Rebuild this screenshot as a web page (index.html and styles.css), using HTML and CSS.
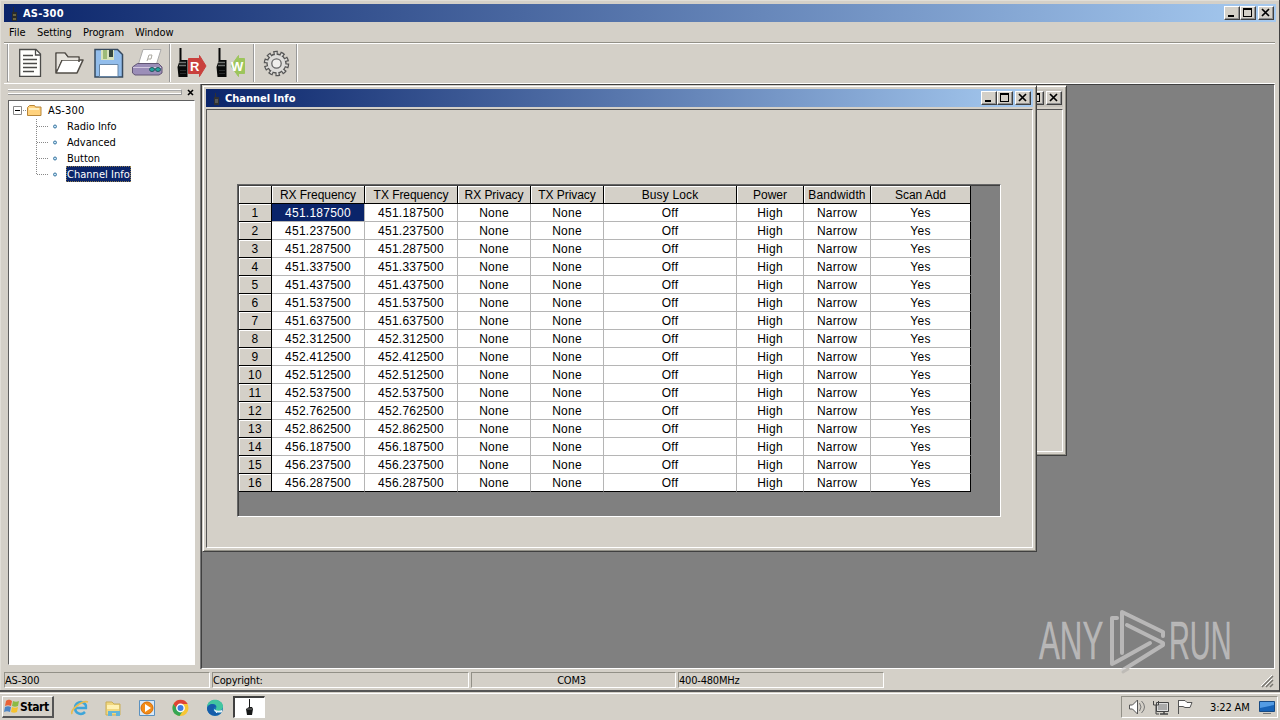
FILE: index.html
```html
<!DOCTYPE html>
<html lang="en">
<head>
<meta charset="utf-8">
<title>AS-300</title>
<link rel="stylesheet" href="styles.css">
</head>
<body>
<main class="app">
  <header class="titlebar">
    <svg class="app-icon" width="19" height="18"><path d="M9 3h1v5h3v9H8V8h1z" fill="#292b2b"/><path d="M9 10h3v2H9zM9 14h3v2H9z" fill="#6b6441"/></svg>
    <span class="title title-main">AS-300</span>
    <div class="controls"><i class="btn min"></i><i class="btn max"></i><i class="btn close"><svg width="14" height="12"><path d="M3 2l7 7M10 2l-7 7" stroke="#000" stroke-width="1.7"/></svg></i></div>
  </header>
  <nav class="menu"><span class="m-file">File</span><span class="m-set">Setting</span><span class="m-prog">Program</span><span class="m-win">Window</span></nav>
  <div class="toolbar">
    <svg class="tools" width="300" height="40" viewBox="0 43 300 40" fill="none">
      <path d="M8.500 44v37" stroke="#fff"/><path d="M7.500 44v38" stroke="#999"/>
      <g stroke="#4b4b49" stroke-width="1.300"><path d="M19.700 49.500h16.300l4.500 4.500v22.300H19.700z" fill="#fffffd"/><path d="M35.500 50v5h5M23 55.500h10M23 59.500h14M23 63.500h14M23 67.500h14M23 71.500h11"/></g>
      <path d="M56 73V53h9l3 4h11v5M56 73l6-13h21l-6 13z" fill="#fff" stroke="#514d47" stroke-width="1.600" stroke-linejoin="round"/><path d="M56.800 70V53.800h7.700l3 4h10.800v2.200H61z" fill="#e6e3dc"/>
      <path d="M95 49.500h22.500l5 5v22.500H95z" fill="#92bdeb" stroke="#36495e" stroke-width="1.500"/><path d="M101 50h13v10h-13z" fill="#d7e2bd"/><path d="M103 50v9h4v-9" fill="#9dbb78"/><path d="M109 50h4v7h-4z" fill="#34463f"/><path d="M99.500 64.500h18.500v12H99.500z" fill="#fff" stroke="#6785a4"/>
      <path d="M143 49.500h18l-5 16h-18z" fill="#fff" stroke="#aaa"/><path d="m149 55-2 6m2-6h3l-1 4h-3" stroke="#aaa8a0"/>
      <path d="M132.500 67l5-3.500h21l3.500 3.500v6l-3 2h-24l-2.500-2z" fill="#9b8eb8" stroke="#625675"/><path d="M133 67.500h28" stroke="#d2c8df"/><ellipse cx="152" cy="69.500" rx="2.500" ry="2" fill="#24a39d" stroke="#255560"/><ellipse cx="158" cy="69.500" rx="2.500" ry="2" fill="#24a39d" stroke="#255560"/>
      <path d="M169.500 44v38M253.500 44v38M296.500 44v38" stroke="#999"/><path d="M170.500 44v38M254.500 44v38M297.500 44v38" stroke="#fff"/>
      <g id="handset"><path d="M179.500 48h2v12h6v17h-9l-1-10 2-6z" fill="#080909"/><path d="M179 62.500h7M179 65.500h7" stroke="#707371" stroke-width="1.500"/><path d="M180 70.500h6M180 73.500h6" stroke="#292c2d"/></g>
      <path d="M188.500 58.500h11v-3l6.500 10.500-6.500 10.500v-3h-11z" fill="#c9403d" stroke="#c9403d"/><text x="190" y="70.500" class="tool-letter">R</text>
      <use href="#handset" x="39"/><path d="M244.500 58.500h-6v-3l-7.500 10.500 7.500 10.500v-3h6z" fill="#9dc55c" stroke="#9dc55c"/><text x="231" y="70.500" class="tool-letter">W</text>
      <circle cx="276.500" cy="63.500" r="10.500" stroke="#555" stroke-width="4.500" stroke-dasharray="4.200 2.397"/><circle cx="276.500" cy="63.500" r="9.500" fill="#deddda" stroke="#555" stroke-width="1.300"/><circle cx="276.500" cy="63.500" r="10" stroke="#deddda" stroke-width="3" stroke-dasharray="1.900 4.383" stroke-dashoffset="-1.050"/><circle cx="276.500" cy="63.500" r="4.700" fill="#f0efec" stroke="#666" stroke-width="1.300"/>
    </svg>
  </div>
  <section class="workspace">
    <aside class="side">
      <div class="grip-row"><i class="grip"></i><svg width="8" height="9"><path d="M1 2l5 5M6 2L1 7" stroke="#000" stroke-width="1.600"/></svg></div>
      <div class="tree">
        <svg class="tree-art" width="60" height="90"><path d="M14 8.500h4M27.500 17v56M28 24.500h11M28 40.500h11M28 56.500h11M28 72.500h11" fill="none" stroke="#888" stroke-dasharray="1 1"/><path d="M4.500 4.500h8v8h-8z" fill="#fff" stroke="#888"/><path d="M6 8.500h5" stroke="#000"/><path d="M18.500 13.500v-8l2-2h5l1 1.500h5.500v8.500z" fill="#ffd27d" stroke="#b88638"/><path d="M20 7h10" stroke="#fff1c4" stroke-width="2"/><g fill="#c7e6fb" stroke="#38749e"><circle cx="46" cy="24.500" r="1.500"/><circle cx="46" cy="40.500" r="1.500"/><circle cx="46" cy="56.500" r="1.500"/><circle cx="46" cy="72.500" r="1.500"/></g></svg>
        <div class="root"><span class="t-root">AS-300</span></div><div><span>Radio Info</span></div><div><span>Advanced</span></div><div><span>Button</span></div><div><span class="selected">Channel Info</span></div>
      </div>
    </aside>
    <div class="mdi">
      <section class="window back-window"><header><div class="controls"><i class="btn min"></i><i class="btn max"></i><i class="btn close"><svg width="14" height="12"><path d="M3 2l7 7M10 2l-7 7" stroke="#000" stroke-width="1.700"/></svg></i></div></header><div class="client"></div></section>
      <section class="window channel-window">
        <header><svg class="app-icon" width="19" height="18"><path d="M9 4h1v4h3v8H8V8h1z" fill="#303132"/><path d="M9 10h3v4H9z" fill="#565757"/></svg><span class="title">Channel Info</span><div class="controls"><i class="btn min"></i><i class="btn max"></i><i class="btn close"><svg width="14" height="12"><path d="M3 2l7 7M10 2l-7 7" stroke="#000" stroke-width="1.700"/></svg></i></div></header>
        <div class="client"><div class="grid-box"><table>
          <colgroup><col class="cn"><col class="cf"><col class="cf"><col class="cp"><col class="cp"><col class="cb"><col class="cw"><col class="cw"><col class="cs"></colgroup>
          <thead><tr><th></th><th>RX Frequency</th><th>TX Frequency</th><th>RX Privacy</th><th>TX Privacy</th><th class="busy">Busy Lock</th><th>Power</th><th class="band">Bandwidth</th><th>Scan Add</th></tr></thead>
          <tbody>
          <tr><th>1</th><td class="active">451.187500</td><td>451.187500</td><td>None</td><td>None</td><td>Off</td><td>High</td><td>Narrow</td><td>Yes</td></tr>
          <tr><th>2</th><td>451.237500</td><td>451.237500</td><td>None</td><td>None</td><td>Off</td><td>High</td><td>Narrow</td><td>Yes</td></tr>
          <tr><th>3</th><td>451.287500</td><td>451.287500</td><td>None</td><td>None</td><td>Off</td><td>High</td><td>Narrow</td><td>Yes</td></tr>
          <tr><th>4</th><td>451.337500</td><td>451.337500</td><td>None</td><td>None</td><td>Off</td><td>High</td><td>Narrow</td><td>Yes</td></tr>
          <tr><th>5</th><td>451.437500</td><td>451.437500</td><td>None</td><td>None</td><td>Off</td><td>High</td><td>Narrow</td><td>Yes</td></tr>
          <tr><th>6</th><td>451.537500</td><td>451.537500</td><td>None</td><td>None</td><td>Off</td><td>High</td><td>Narrow</td><td>Yes</td></tr>
          <tr><th>7</th><td>451.637500</td><td>451.637500</td><td>None</td><td>None</td><td>Off</td><td>High</td><td>Narrow</td><td>Yes</td></tr>
          <tr><th>8</th><td>452.312500</td><td>452.312500</td><td>None</td><td>None</td><td>Off</td><td>High</td><td>Narrow</td><td>Yes</td></tr>
          <tr><th>9</th><td>452.412500</td><td>452.412500</td><td>None</td><td>None</td><td>Off</td><td>High</td><td>Narrow</td><td>Yes</td></tr>
          <tr><th>10</th><td>452.512500</td><td>452.512500</td><td>None</td><td>None</td><td>Off</td><td>High</td><td>Narrow</td><td>Yes</td></tr>
          <tr><th>11</th><td>452.537500</td><td>452.537500</td><td>None</td><td>None</td><td>Off</td><td>High</td><td>Narrow</td><td>Yes</td></tr>
          <tr><th>12</th><td>452.762500</td><td>452.762500</td><td>None</td><td>None</td><td>Off</td><td>High</td><td>Narrow</td><td>Yes</td></tr>
          <tr><th>13</th><td>452.862500</td><td>452.862500</td><td>None</td><td>None</td><td>Off</td><td>High</td><td>Narrow</td><td>Yes</td></tr>
          <tr><th>14</th><td>456.187500</td><td>456.187500</td><td>None</td><td>None</td><td>Off</td><td>High</td><td>Narrow</td><td>Yes</td></tr>
          <tr><th>15</th><td>456.237500</td><td>456.237500</td><td>None</td><td>None</td><td>Off</td><td>High</td><td>Narrow</td><td>Yes</td></tr>
          <tr><th>16</th><td>456.287500</td><td>456.287500</td><td>None</td><td>None</td><td>Off</td><td>High</td><td>Narrow</td><td>Yes</td></tr>
          </tbody></table></div></div>
      </section>
    </div>
  </section>
  <footer class="status"><span class="s1">AS-300</span><span class="s2">Copyright:</span><span class="s3">COM3</span><span class="s4">400-480MHz</span><svg class="resize" width="14" height="14"><path d="M2 13L13 2M6 13l7-7M10 13l3-3" stroke="#77756f" stroke-width="1.500"/><path d="M1 12L12 1M5 12l7-7" stroke="#fff"/></svg></footer>
</main>
<div class="watermark"><svg width="210" height="75" viewBox="1034 605 210 75"><text class="brand" transform="translate(1039 659) scale(.59 1)">ANY</text><text class="brand" transform="translate(1169 659) scale(.545 1)">RUN</text><path d="M1117 618h-5v46l4-2 34-19M1122 653v-41l41 20v4M1127 625l36 18v2l-40 25" fill="none" stroke="#d0cfcf" stroke-opacity=".7" stroke-width="4" stroke-linejoin="round" stroke-linecap="round"/><path d="M1123 672l5-3" stroke="#bebbb6" stroke-width="3" stroke-linecap="round"/></svg></div>
<footer class="taskbar">
  <button class="start"><svg width="17" height="17"><path d="M3 3c3-2 4-1 6 0l-1 5c-2-1-4-1-6 0z" fill="#e96237"/><path d="M10 3c2 1 4 1 6 0l-1 5c-2 1-4 1-6 0z" fill="#8cba45"/><path d="M2 9c2-1 4-1 6 0l-1 5c-2-1-4-1-6 0z" fill="#4d85c5"/><path d="M9 9c2 1 4 1 6 0l-1 5c-2 1-4 1-6 0z" fill="#f6c22e"/></svg><span>Start</span></button>
  <svg class="quick" width="164" height="24" viewBox="66 695 164 24">
    <path d="M85 711c-4 4-10 1-10-4s6-8 10-4c1 1 1.500 2 1 4H76" fill="none" stroke="#3ea5d9" stroke-width="2.500"/><path d="M72 713c-2-4 10-14 16-12" fill="none" stroke="#e8bc50" stroke-width="1.800"/>
    <path d="M106 701h6l2 2h6v11h-14z" fill="#f1d77e" stroke="#c9ad56"/><path d="M107 704h12v4h-12z" fill="#fff1b3"/><path d="M108 715v-5h12v5h-4v-3h-4v3z" fill="#64b5d8"/>
    <path d="M139.500 699.500h15v15h-15z" fill="#d8e8f8" stroke="#5b91bf"/><circle cx="147" cy="707" r="6" fill="#f38b16" stroke="#d66d05"/><path d="M145 703l6 4-6 4z" fill="#fff"/>
    <circle cx="180.500" cy="707" r="8" fill="#f7c635"/><path d="M173.500 703a8 8 0 0 1 14.200 0h-7.200a4 4 0 0 0-3.500 6z" fill="#df4335"/><path d="M173.500 703a8 8 0 0 0 6 12l4-6a4 4 0 0 1-6-.5z" fill="#36a654"/><circle cx="180.500" cy="707" r="3.700" fill="#3d7de0" stroke="#fff" stroke-width="1.400"/>
    <circle cx="215" cy="707" r="8" fill="#1675b5"/><path d="M207 706c1-10 15-9 16-1 0 5-5 6-8 4 3-3 1-6-2-6-4 0-6 3-6 3" fill="#42c6a0"/><path d="M207 707c2-5 8-5 9-1-5 0-3 8 5 6-5 5-14 2-14-5" fill="#165da9"/><path d="M214 708c0 4 5 4 8 3v-2c-3 1-6 1-8-1z" fill="#e6f3f8"/>
  </svg>
  <div class="task"><svg width="28" height="20"><path d="M14 1h1v8h2l1 2-1 6h-5l-1-6 3-2z" fill="#171818"/><path d="M12 11h5" stroke="#777"/></svg></div>
  <div class="tray"><svg width="70" height="20" viewBox="1126 697 70 20"><path d="M1129.500 705h3l5-5v14l-5-5h-3z" fill="#fff" stroke="#555"/><path d="M1139.500 703q3 4 0 8M1141.500 701q6 6 0 12" fill="none" stroke="#777"/><path d="M1156.500 702.500h12v9h-12z" fill="#ddd" stroke="#444"/><path d="M1158 704h9v6h-9z" fill="#aaa"/><path d="M1160 714h8M1164 711v3" stroke="#444" stroke-width="1.500"/><path d="M1153.500 701v4h5v-4M1156 705v9h3" fill="none" stroke="#444"/><path d="M1178.500 714v-14M1179 700.500h6l2 2h5l-2 5h-5l-2-1h-4" fill="#fff" stroke="#555"/></svg><time>3:22 AM</time><svg class="desktop" width="16" height="18"><path d="M.5 3.500h15v10H.5z" fill="#1763b7" stroke="#174a83"/><path d="M1 4h14v3L1 10z" fill="#539ce4"/><path d="M4 15.500h8" stroke="#777"/></svg></div>
</footer>
</body>
</html>
```
FILE: styles.css
```css
*,*:after{box-sizing:border-box}
body{margin:0;width:1280px;height:720px;overflow:hidden;background:#d4d0c8;color:#000;font:11px "DejaVu Sans Condensed","DejaVu Sans",sans-serif;position:relative}
svg{display:block;flex:none}
.app{height:692px;padding:4px 4px 0;display:flex;flex-direction:column;border-right:1px solid #404040;border-bottom:2px solid #555;box-shadow:inset 0 1px #e1ded7,inset 1px 0 #e1ded7}
.titlebar,.window>header{height:18px;display:flex;align-items:center;background:linear-gradient(90deg,#0a246a,#a6caf0);color:#fff;flex:none}
.titlebar{width:1272px}
.title{font-weight:bold;white-space:nowrap}
.title-main{letter-spacing:.2px}
.controls{display:flex;margin-left:auto;margin-right:2px;height:14px}
.btn{width:16px;height:14px;background:#d4d0c8;border:1px solid #fff;border-right-color:#404040;border-bottom-color:#404040;box-shadow:inset -1px -1px #909090;position:relative;display:block}
.min:after,.max:after{content:"";position:absolute;left:3px;bottom:2px;width:6px;height:2px;background:#000}
.max:after{left:2px;bottom:2px;width:9px;height:9px;background:none;border:1px solid #000;border-top-width:2px}
.close{margin-left:2px}
.menu{height:20px;display:flex;align-items:center;padding-left:5px}
.menu span{white-space:nowrap}
.m-file{width:28px}.m-set{width:46px;letter-spacing:-.12px}.m-prog{width:52px;letter-spacing:-.1px}.m-win{letter-spacing:-.1px}
.toolbar{height:42px;border-top:1px solid #929087;border-bottom:1px solid #fff;box-shadow:inset 0 1px #fff;flex:none}
.tools{margin-left:-4px}
.tool-letter{font:bold 13px "Liberation Sans",Arial,sans-serif;fill:#fff}
.workspace{height:585px;display:flex;flex:none}
.side{width:197px;padding:4px 5px 4px 4px;display:flex;flex-direction:column;border-right:1px solid #777}
.grip-row{height:12px;display:flex;align-items:flex-start;gap:5px}
.grip{width:175px;height:6px;margin-top:1px;border:1px solid #999;border-left:0;border-top-color:#fff;box-shadow:inset 0 1px #aaa,inset 0 -1px #fff}
.tree{height:565px;border:1px solid #606060;border-right-color:#fff;border-bottom-color:#fff;background:#fff;position:relative}
.tree div{height:16px;line-height:16px;padding-left:58px;white-space:nowrap}
.tree .root{padding-left:39px;padding-top:2px;height:18px;line-height:16px}
.tree-art{position:absolute;left:0;top:1px}
.tree .selected{display:block;width:65px;height:16px;line-height:18px;margin:-1px 0 0 -1px;padding:0 1px;background:#0a246a;color:#fff;outline:1px dotted #92804f;outline-offset:-1px;letter-spacing:.02px}
.tree div:last-child{display:flow-root;margin-top:-1px;padding-top:1px;height:17px}
.t-root{letter-spacing:.15px}
.mdi{width:1074px;background:#808080;position:relative;border-top:1px solid #404040;border-left:1px solid #404040;border-right:1px solid #fff;border-bottom:1px solid #fff}
.window{position:absolute;background:#d4d0c8;padding:3px;display:flex;flex-direction:column;border:1px solid #d4d0c8;border-right-color:#404040;border-bottom-color:#404040;box-shadow:inset 1px 1px #fff,inset -1px -1px #929087}
.channel-window{left:0;top:0;width:835px;height:467px}
.back-window{left:500px;top:0;width:365px;height:371px}
.back-window>header{background:#c5c2bb}
.back-window .controls{margin-right:1px}
.client{margin-top:2px;flex:1;border:1px solid #555;border-right-color:#fff;border-bottom-color:#fff;padding:74px 0 0 30px}
.grid-box{width:764px;height:333px;padding:1px 0 0 1px;background:#808080;border:1px solid #666;border-right:1px solid #fff;border-bottom:1px solid #fff;box-shadow:inset 1px 1px #404040}
table{border-collapse:separate;border-spacing:0;table-layout:fixed;width:732px;font:12px "Liberation Sans",Arial,sans-serif;letter-spacing:.25px}
.cn{width:33px}.cf{width:93px}.cp{width:73px}.cb{width:133px}.cw{width:67px}.cs{width:100px}
td,th{padding:2px 0 0;height:18px;line-height:15px;text-align:center;font-weight:normal;white-space:nowrap;overflow:visible}
td{background:#fff;border-right:1px solid #b5b5b5;border-bottom:1px solid #b5b5b5}
th{background:#d4d0c8;border-right:1px solid #000;border-bottom:1px solid #000;box-shadow:inset 1px 1px #fff}
thead th{letter-spacing:-.05px}
tr>:last-child{border-right-color:#000}
tr:last-child td{border-bottom-color:#000}
.active{background:#0a246a;color:#fff}
thead .band,thead .busy{letter-spacing:.15px}
.status{height:20px;padding-top:3px;display:flex;gap:2px}
.status span{height:16px;line-height:15px;border:1px solid #929087;border-right-color:#fff;border-bottom-color:#fff;letter-spacing:-.2px;white-space:nowrap}
.s1{width:206px}.s2{width:257px}.s3{width:205px;text-align:center;padding-right:4px}.s4{width:206px}
.resize{margin:2px 1px 0 auto}
.watermark{position:absolute;left:1034px;top:605px}
.brand{font:53px "Liberation Sans",Arial,sans-serif;fill:#d0cfcf;fill-opacity:.7;stroke:#d0cfcf;stroke-opacity:.3}
.taskbar{height:28px;border-top:1px solid #d4d0c8;box-shadow:inset 0 1px #fff;display:flex;align-items:flex-start;padding:3px 2px 0}
.start{width:52px;height:22px;padding:0;border:1px solid #fff;border-right:2px solid #555;border-bottom:2px solid #555;background:#d4d0c8;display:flex;align-items:center;color:#000;font:bold 12px "DejaVu Sans Condensed",sans-serif;letter-spacing:-.4px}
.quick{margin-left:12px}
.task{margin-left:3px;width:32px;height:22px;border:2px solid #404040;border-right:1px solid #fff;border-bottom:1px solid #fff;background:#fff}
.tray{width:157px;height:22px;border:1px solid #929087;border-right-color:#fff;border-bottom-color:#fff;margin-left:auto;display:flex;align-items:center;padding-left:4px}
time{width:42px;margin-left:14px;white-space:nowrap;letter-spacing:-.15px}
.desktop{margin-left:7px}
```
